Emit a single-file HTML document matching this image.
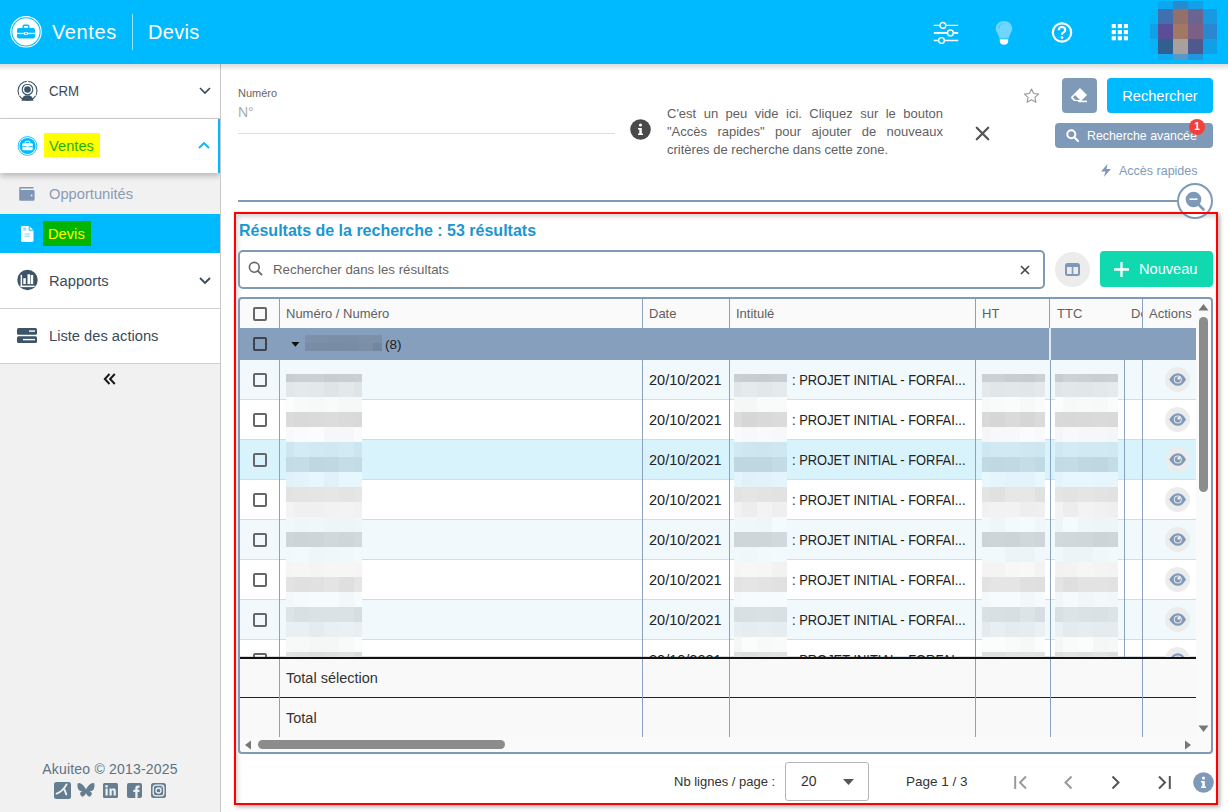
<!DOCTYPE html>
<html><head><meta charset="utf-8">
<style>
*{box-sizing:border-box;margin:0;padding:0}
html,body{width:1228px;height:812px;overflow:hidden;background:#fff;font-family:"Liberation Sans",sans-serif;color:#333}
.a{position:absolute}
#hdr{left:0;top:0;width:1228px;height:64px;background:#00baff}
#side{left:0;top:64px;width:221px;height:748px;background:#f1f1f1;border-right:1px solid #c8c8c8;overflow:hidden}
.mi{left:0;width:220px;background:#fff;border-bottom:1px solid #cfcfcf}
.mt{font-size:14.7px;color:#3a4a5c}
.ht{font-size:13px;color:#606060}
.cb{width:14px;height:14px;border:2px solid #666;border-radius:2px}
.dt{font-size:14.5px;color:#222}
.tt{font-size:14.5px;color:#333}
.eye{width:25px;height:25px;border-radius:50%;background:#ececec}
</style></head><body>
<!-- HEADER -->
<div id="hdr" class="a">
  <svg class="a" style="left:10px;top:16px" width="32" height="32" viewBox="0 0 32 32">
    <circle cx="16" cy="15.8" r="15.2" fill="none" stroke="#fff" stroke-width="1.1"/>
    <circle cx="16" cy="15.8" r="13.6" fill="#fff"/>
    <rect x="7" y="12" width="18" height="10.5" rx="1.8" fill="#00baff"/>
    <rect x="13.2" y="9.3" width="5.6" height="3.2" rx="1" fill="none" stroke="#00baff" stroke-width="1.4"/>
    <rect x="7" y="16.8" width="18" height="1.3" fill="#fff"/>
    <rect x="14.3" y="16" width="3.4" height="3" fill="#fff"/>
    <rect x="15.1" y="16.6" width="1.8" height="1.6" fill="#00baff"/>
  </svg>
  <div class="a" style="left:52px;top:21px;font-size:20px;color:#fff;letter-spacing:.6px">Ventes</div>
  <div class="a" style="left:132px;top:14px;width:1px;height:36px;background:rgba(255,255,255,.6)"></div>
  <div class="a" style="left:148px;top:21px;font-size:20px;color:#fff;letter-spacing:.3px">Devis</div>

  <svg class="a" style="left:933px;top:21px" width="27" height="23" viewBox="0 0 27 23">
    <path d="M0.8 4.4 H25.2 M0.8 19.5 H25.2" stroke="#fff" stroke-width="1.3"/>
    <path d="M0.8 11.9 H25.2" stroke="#fff" stroke-width="1.9"/>
    <g stroke="#fff" stroke-width="1.4" fill="#00baff">
      <circle cx="9.9" cy="4.4" r="2.9"/><circle cx="17.4" cy="11.9" r="2.9"/><circle cx="8.5" cy="19.5" r="2.9"/>
    </g>
  </svg>
  <svg class="a" style="left:995px;top:20px" width="18" height="25" viewBox="0 0 18 25">
    <path d="M9 0.9 C4.2 0.9 0.8 4.3 0.8 8.6 C0.8 12.3 3.4 14.2 4.4 18.5 H13.6 C14.6 14.2 17.2 12.3 17.2 8.6 C17.2 4.3 13.8 0.9 9 0.9Z" fill="#6fd6ff"/>
    <path d="M3.8 9 Q3.8 4.6 7.6 3.5" fill="none" stroke="#00baff" stroke-width=".8" opacity=".6"/>
    <path d="M4.8 19.3 H13.2 V21 Q13.2 24.7 9 24.7 Q4.8 24.7 4.8 21Z" fill="#fff"/>
  </svg>
  <svg class="a" style="left:1051px;top:21.5px" width="22" height="21" viewBox="0 0 22 21">
    <circle cx="11" cy="10.5" r="9.2" fill="none" stroke="#fff" stroke-width="2.2"/>
    <path d="M7.8 8.2 Q7.8 5 11 5 Q14.2 5 14.2 7.9 Q14.2 9.7 12.2 10.6 Q11 11.2 11 12.8" fill="none" stroke="#fff" stroke-width="2.1"/>
    <circle cx="11" cy="15.6" r="1.3" fill="#fff"/>
  </svg>
  <svg class="a" style="left:1111px;top:23px" width="18" height="18" viewBox="0 0 18 18" fill="#fff"><rect x="0.7" y="1" width="4.1" height="4.1"/><rect x="6.8" y="1" width="4.1" height="4.1"/><rect x="12.9" y="1" width="4.1" height="4.1"/><rect x="0.7" y="7.1" width="4.1" height="4.1"/><rect x="6.8" y="7.1" width="4.1" height="4.1"/><rect x="12.9" y="7.1" width="4.1" height="4.1"/><rect x="0.7" y="13.2" width="4.1" height="4.1"/><rect x="6.8" y="13.2" width="4.1" height="4.1"/><rect x="12.9" y="13.2" width="4.1" height="4.1"/></svg>
<div class="a" style="left:1158px;top:1px;width:15px;height:8px;background:#0aa8f0"></div>
<div class="a" style="left:1173px;top:1px;width:15px;height:8px;background:#2a8ad0"></div>
<div class="a" style="left:1188px;top:1px;width:15px;height:8px;background:#14a0e8"></div>
<div class="a" style="left:1150px;top:9px;width:8px;height:15px;background:#05b4f8"></div>
<div class="a" style="left:1158px;top:9px;width:15px;height:15px;background:#4070b0"></div>
<div class="a" style="left:1173px;top:9px;width:15px;height:15px;background:#94706a"></div>
<div class="a" style="left:1188px;top:9px;width:15px;height:15px;background:#6a6490"></div>
<div class="a" style="left:1203px;top:9px;width:14px;height:15px;background:#1a98e0"></div>
<div class="a" style="left:1150px;top:24px;width:8px;height:15px;background:#10a0e8"></div>
<div class="a" style="left:1158px;top:24px;width:15px;height:15px;background:#5a4e98"></div>
<div class="a" style="left:1173px;top:24px;width:15px;height:15px;background:#a07864"></div>
<div class="a" style="left:1188px;top:24px;width:15px;height:15px;background:#7a6088"></div>
<div class="a" style="left:1203px;top:24px;width:14px;height:15px;background:#2a88d0"></div>
<div class="a" style="left:1150px;top:39px;width:8px;height:15px;background:#08b2f6"></div>
<div class="a" style="left:1158px;top:39px;width:15px;height:15px;background:#306090"></div>
<div class="a" style="left:1173px;top:39px;width:15px;height:15px;background:#a8a09c"></div>
<div class="a" style="left:1188px;top:39px;width:15px;height:15px;background:#505890"></div>
<div class="a" style="left:1203px;top:39px;width:14px;height:15px;background:#10a0e8"></div>
<div class="a" style="left:1158px;top:54px;width:15px;height:6px;background:#10a8f0"></div>
<div class="a" style="left:1173px;top:54px;width:15px;height:6px;background:#5898c8"></div>
<div class="a" style="left:1188px;top:54px;width:15px;height:6px;background:#2098e0"></div>
</div>
<!-- SIDEBAR -->
<div id="side" class="a">
  <!-- CRM -->
  <div class="a mi" style="top:0;height:55px">
    <svg class="a" style="left:17px;top:16px" width="22" height="22" viewBox="0 0 22 22">
      <circle cx="10.5" cy="10.8" r="9.5" fill="none" stroke="#3d5468" stroke-width="1.1"/>
      <circle cx="10.5" cy="9.5" r="5.3" fill="none" stroke="#3d5468" stroke-width="1.1"/>
      <circle cx="10.5" cy="9.5" r="3.3" fill="#3d5468"/>
      <path d="M4.5 20.8 Q4.8 15.2 10.5 15.2 Q16.2 15.2 16.5 20.8 Z" fill="#3d5468"/>
      <path d="M10.5 0.5 L10.5 4 M1.5 15.5 L5.2 13.6 M19.5 15.5 L15.8 13.6" stroke="#fff" stroke-width="1.4"/>
    </svg>
    <div class="a mt" style="left:49px;top:19px;transform:scaleX(.9);transform-origin:0 0">CRM</div>
    <svg class="a" style="left:199px;top:23px" width="12" height="8" viewBox="0 0 12 8"><path d="M1 1 L6 6 L11 1" fill="none" stroke="#3a4a5c" stroke-width="1.6"/></svg>
  </div>
  <!-- Ventes -->
  <div class="a mi" style="top:55px;height:54px;border-bottom:none;box-shadow:0 3px 6px rgba(0,0,0,.24);z-index:2">
    <svg class="a" style="left:17px;top:16px" width="22" height="22" viewBox="0 0 22 22">
      <circle cx="10.5" cy="11" r="9.4" fill="none" stroke="#00baff" stroke-width="0.9"/>
      <circle cx="10.5" cy="11" r="8.1" fill="#00baff"/>
      <rect x="5.3" y="8.3" width="10.4" height="7" rx="1" fill="#fff"/>
      <rect x="8.2" y="6.3" width="4.6" height="2.4" rx=".7" fill="none" stroke="#fff" stroke-width="1"/>
      <rect x="5.3" y="11.2" width="10.4" height=".9" fill="#00baff"/>
      <rect x="9.6" y="10.7" width="1.8" height="1.9" fill="#fff"/>
    </svg>
    <div class="a" style="left:44px;top:14px;width:56px;height:24px;background:#ffff00"></div>
    <div class="a mt" style="left:49px;top:19px;color:#22b100">Ventes</div>
    <svg class="a" style="left:198px;top:22px" width="12" height="8" viewBox="0 0 12 8"><path d="M1 7 L6 2 L11 7" fill="none" stroke="#00baff" stroke-width="1.8"/></svg>
    <div class="a" style="left:218px;top:0;width:2px;height:54px;background:#00baff"></div>
  </div>
  <!-- Opportunites -->
  <svg class="a" style="left:19px;top:123px" width="16" height="14" viewBox="0 0 16 14"><path d="M1.5 0 H14.5 V1.6 H1.6 V2.9 H14.2 Q15.6 2.9 15.6 4.3 V12.4 Q15.6 13.8 14.2 13.8 H1.5 Q0.2 13.8 0.2 12.4 V1.4 Q0.2 0 1.5 0Z" fill="#7f95b5"/><circle cx="12.6" cy="8.4" r=".9" fill="#f1f1f1"/></svg>
  <div class="a mt" style="left:49px;top:122px;color:#8a9cb4">Opportunités</div>
  <!-- Devis -->
  <div class="a" style="left:0;top:150px;width:220px;height:39px;background:#00baff">
    <svg class="a" style="left:21px;top:12px" width="13" height="16" viewBox="0 0 13 16"><path d="M1.3 0 H8.2 L12.5 4.2 V14.6 Q12.5 15.9 11.2 15.9 H1.3 Q0 15.9 0 14.6 V1.3 Q0 0 1.3 0Z" fill="#fff"/><path d="M8.2 0 V4.2 H12.5" fill="none" stroke="#00baff" stroke-width=".9"/><rect x="2.2" y="1.7" width="3" height="1" fill="#5ec8f5"/><rect x="2.2" y="3.5" width="3" height="1" fill="#5ec8f5"/><rect x="3.5" y="7.4" width="5.6" height="1.3" fill="#a8dcf5"/><rect x="3.5" y="9.6" width="5.6" height="1.3" fill="#a8dcf5"/></svg>
    <div class="a" style="left:43px;top:7px;width:48px;height:25px;background:#00b400"></div>
    <div class="a mt" style="left:48px;top:12px;color:#ffff00">Devis</div>
  </div>
  <!-- Rapports -->
  <div class="a mi" style="top:189px;height:56px">
    <svg class="a" style="left:17px;top:16px" width="22" height="22" viewBox="0 0 22 22">
      <circle cx="10.5" cy="11" r="10.2" fill="#3d5468"/>
      <rect x="3.6" y="5.8" width="1.5" height="12.3" fill="#fff"/>
      <rect x="3.6" y="16.6" width="14" height="1.5" fill="#fff"/>
      <rect x="6.3" y="9.2" width="2.5" height="5.9" fill="#fff"/>
      <rect x="10.5" y="5.3" width="2.6" height="9.8" fill="#fff"/>
      <rect x="13.7" y="6" width="2.5" height="9.1" fill="#fff"/>
    </svg>
    <div class="a mt" style="left:49px;top:20px">Rapports</div>
    <svg class="a" style="left:199px;top:24px" width="12" height="8" viewBox="0 0 12 8"><path d="M1 1 L6 6 L11 1" fill="none" stroke="#3a4a5c" stroke-width="1.8"/></svg>
  </div>
  <!-- Liste des actions -->
  <div class="a mi" style="top:245px;height:55px">
    <svg class="a" style="left:17px;top:19px" width="20" height="16" viewBox="0 0 20 16"><rect x="0" y="0" width="20" height="6.8" rx="1.5" fill="#3d5468"/><rect x="0" y="8.3" width="20" height="6.8" rx="1.5" fill="#3d5468"/><rect x="12" y="2.4" width="6" height="1.4" fill="#fff"/><rect x="6" y="10.9" width="12" height="1.4" fill="#fff"/></svg>
    <div class="a mt" style="left:49px;top:19px">Liste des actions</div>
  </div>
  <svg class="a" style="left:103px;top:309px" width="13" height="12" viewBox="0 0 13 12"><path d="M6.5 1 L1.8 6 L6.5 11 M11.8 1 L7.1 6 L11.8 11" fill="none" stroke="#1a1a1a" stroke-width="2"/></svg>
  <div class="a" style="left:0;top:697px;width:220px;text-align:center;font-size:14px;color:#5d7286;letter-spacing:.2px">Akuiteo © 2013-2025</div>
  <svg class="a" style="left:54px;top:718px" width="17" height="17" viewBox="0 0 17 17"><rect width="17" height="17" rx="2.5" fill="#647d91"/><path d="M2.6 11.6 Q8.5 9.8 12.6 2.4" fill="none" stroke="#f1f1f1" stroke-width="1.9" stroke-linecap="round"/><path d="M10.2 7 L12.3 12.4" fill="none" stroke="#f1f1f1" stroke-width="1.9" stroke-linecap="round"/></svg>
  <svg class="a" style="left:77px;top:718px" width="18" height="17" viewBox="0 0 18 17"><path d="M9 7.5 C7.5 4 4 0.5 1.5 1 C0 1.4 0.4 5 1.2 7 C2 9 4 9.3 5.5 9.2 C3 9.8 2.5 11.5 3.8 13.5 C5.5 16 7.8 14 9 11 C10.2 14 12.5 16 14.2 13.5 C15.5 11.5 15 9.8 12.5 9.2 C14 9.3 16 9 16.8 7 C17.6 5 18 1.4 16.5 1 C14 0.5 10.5 4 9 7.5Z" fill="#647d91"/></svg>
  <svg class="a" style="left:103px;top:719px" width="15" height="15" viewBox="0 0 15 15"><rect width="15" height="15" rx="1.5" fill="#647d91"/><rect x="2.5" y="5.5" width="2.2" height="7" fill="#f1f1f1"/><circle cx="3.6" cy="3.3" r="1.3" fill="#f1f1f1"/><path d="M6.5 5.5 H8.6 V6.6 Q9.4 5.3 11 5.3 Q12.8 5.3 12.8 8 V12.5 H10.6 V8.5 Q10.6 7.2 9.7 7.2 Q8.7 7.2 8.7 8.6 V12.5 H6.5Z" fill="#f1f1f1"/></svg>
  <svg class="a" style="left:127px;top:719px" width="15" height="15" viewBox="0 0 15 15"><rect width="15" height="15" rx="2" fill="#647d91"/><path d="M8.3 15 V9 H6.3 V6.8 H8.3 V5.2 Q8.3 2.6 10.9 2.6 H12.6 V4.8 H11.3 Q10.6 4.8 10.6 5.6 V6.8 H12.6 L12.3 9 H10.6 V15Z" fill="#f1f1f1"/></svg>
  <svg class="a" style="left:151px;top:719px" width="15" height="15" viewBox="0 0 15 15"><rect width="15" height="15" rx="2.5" fill="#647d91"/><rect x="2.2" y="2.2" width="10.6" height="10.6" rx="2.5" fill="none" stroke="#f1f1f1" stroke-width="1.3"/><circle cx="7.5" cy="7.5" r="2.5" fill="none" stroke="#f1f1f1" stroke-width="1.3"/><circle cx="10.9" cy="4.1" r=".7" fill="#f1f1f1"/></svg>

</div>

<!-- MAIN TOP -->
<div class="a" style="left:0;top:64px;width:1228px;height:7px;background:linear-gradient(rgba(0,0,0,.14),rgba(0,0,0,0));z-index:4"></div>
<div class="a" style="left:238px;top:87px;font-size:11px;color:#666">Numéro</div>
<div class="a" style="left:238px;top:104px;font-size:14px;color:#aaa">N°</div>
<div class="a" style="left:238px;top:133px;width:377px;height:1px;background:#dcdcdc"></div>
<svg class="a" style="left:630px;top:119px" width="21" height="21" viewBox="0 0 21 21"><circle cx="10.5" cy="10.5" r="10.3" fill="#4a4a4a"/><circle cx="10.5" cy="6" r="1.6" fill="#fff"/><path d="M8 9 H11.8 V14.5 H13 V16 H8 V14.5 H9.3 V10.5 H8 Z" fill="#fff"/></svg>
<div class="a" style="left:667px;top:105px;width:276px;font-size:13px;line-height:18px;color:#5f5f5f;text-align:justify;text-align-last:left">C'est un peu vide ici. Cliquez sur le bouton "Accès rapides" pour ajouter de nouveaux critères de recherche dans cette zone.</div>
<svg class="a" style="left:975px;top:126px" width="15" height="15" viewBox="0 0 15 15"><path d="M1.8 1.8 L13.2 13.2 M13.2 1.8 L1.8 13.2" stroke="#555" stroke-width="2.3" stroke-linecap="round"/></svg>
<svg class="a" style="left:1023px;top:88px" width="17" height="16" viewBox="0 0 24 23"><path d="M12 1.5 L15.1 8 L22.2 8.8 L16.9 13.6 L18.4 20.6 L12 17 L5.6 20.6 L7.1 13.6 L1.8 8.8 L8.9 8 Z" fill="none" stroke="#9a9a9a" stroke-width="1.6" stroke-linejoin="round"/></svg>
<div class="a" style="left:1062px;top:78px;width:35px;height:35px;background:#7f99b9;border-radius:4px">
  <svg class="a" style="left:8px;top:9px" width="19" height="17" viewBox="0 0 19 17"><path d="M10 1 L17 8 L11 14 H4 L1.5 11.5 Q0.5 10.5 1.5 9.5 Z" fill="#fff"/><path d="M5 8 L10 13 L5.5 13 L3 10.5 Z" fill="#7f99b9"/><rect x="8" y="13.6" width="9" height="1.6" fill="#fff"/></svg>
</div>
<div class="a" style="left:1107px;top:78px;width:106px;height:35px;background:#00baff;border-radius:4px;color:#fff;font-size:14.6px;text-align:center;line-height:37px">Rechercher</div>
<div class="a" style="left:1055px;top:123px;width:158px;height:25px;background:#7f99b9;border-radius:4px;color:#fff;font-size:13px;line-height:25px">
  <svg class="a" style="left:11px;top:6px" width="13" height="13" viewBox="0 0 13 13"><circle cx="5.3" cy="5.3" r="4" fill="none" stroke="#fff" stroke-width="2"/><path d="M8.3 8.3 L12 12" stroke="#fff" stroke-width="2.2" stroke-linecap="round"/></svg>
  <span class="a" style="left:32px;top:0;white-space:nowrap;transform:scaleX(.95);transform-origin:0 0">Recherche avancée</span>
</div>
<div class="a" style="left:1189px;top:119px;width:16px;height:16px;border-radius:50%;background:#f2403a;color:#fff;font-size:10px;font-weight:bold;text-align:center;line-height:16px">1</div>
<svg class="a" style="left:1100px;top:164px" width="12" height="13" viewBox="0 0 12 13"><path d="M7.5 0 L1 7.5 H5.5 L3.8 13 L11 5 H6.5 Z" fill="#7f99b9"/></svg>
<div class="a" style="left:1119px;top:164px;font-size:12.5px;color:#7f99b9">Accès rapides</div>
<div class="a" style="left:238px;top:200px;width:942px;height:2px;background:#7f99b9"></div>
<div class="a" style="left:1177px;top:183px;width:36px;height:36px;border-radius:50%;border:2px solid #7f99b9;background:#fff;z-index:3">
  <svg class="a" style="left:0;top:0" width="32" height="32" viewBox="0 0 32 32"><path d="M19 19 L24.5 24.5" stroke="#7f99b9" stroke-width="2.6" stroke-linecap="round"/><circle cx="14.5" cy="14.5" r="7.8" fill="#7f99b9"/><rect x="10.5" y="13.4" width="8" height="1.6" fill="#fff"/></svg>
</div>
<!-- RESULTS BOX -->
<div class="a" style="left:234px;top:212px;width:984px;height:593px;box-shadow:2px 2px 4px rgba(0,0,0,.3)"></div><div class="a" style="left:236px;top:214px;width:980px;height:589px;background:#fff;box-shadow:inset 2px 3px 4px rgba(0,0,0,.16)"></div>
<div class="a" style="left:239px;top:222px;font-size:16px;font-weight:bold;color:#1c96d2">Résultats de la recherche : 53 résultats</div>
<div class="a" style="left:238px;top:250px;width:807px;height:39px;border:2px solid #7f99b9;border-radius:5px;background:#fff">
  <svg class="a" style="left:8px;top:9px" width="16" height="16" viewBox="0 0 16 16"><circle cx="6.3" cy="6.3" r="4.9" fill="none" stroke="#666" stroke-width="1.6"/><path d="M9.8 9.8 L13.6 13.6" stroke="#666" stroke-width="1.8" stroke-linecap="round"/></svg>
  <div class="a" style="left:33px;top:10px;font-size:13.3px;color:#666">Rechercher dans les résultats</div>
  <svg class="a" style="left:780px;top:13px" width="10" height="10" viewBox="0 0 10 10"><path d="M1 1 L9 9 M9 1 L1 9" stroke="#444" stroke-width="1.6"/></svg>
</div>
<div class="a" style="left:1055px;top:252px;width:35px;height:35px;border-radius:50%;background:#ececec">
  <svg class="a" style="left:10px;top:11px" width="15" height="13" viewBox="0 0 15 13"><rect x="1" y="1" width="13" height="11" rx="1.5" fill="none" stroke="#7f99b9" stroke-width="2"/><rect x="1" y="1" width="13" height="3" fill="#7f99b9"/><rect x="6.7" y="2" width="1.6" height="10" fill="#7f99b9"/></svg>
</div>
<div class="a" style="left:1100px;top:251px;width:113px;height:36px;border-radius:4px;background:#10d9b0;color:#fff;font-size:14.6px;line-height:36px">
  <svg class="a" style="left:13px;top:10px" width="17" height="17" viewBox="0 0 17 17"><path d="M8.5 1 V16 M1 8.5 H16" stroke="#fff" stroke-width="2.3"/></svg>
  <span class="a" style="left:39px;top:0">Nouveau</span>
</div>
<!-- TABLE -->
<div class="a" style="left:238px;top:297px;width:975px;height:457px;border-radius:4px;background:#fafafa"></div>
<div class="a ht" style="left:286px;top:306px">Numéro / Numéro</div>
<div class="a ht" style="left:649px;top:306px">Date</div>
<div class="a ht" style="left:736px;top:306px">Intitulé</div>
<div class="a ht" style="left:982px;top:306px">HT</div>
<div class="a ht" style="left:1057px;top:306px">TTC</div>
<div class="a ht" style="left:1131px;top:306px">De</div>
<div class="a" style="left:1142px;top:299px;width:54px;height:29px;background:#fafafa"></div>
<div class="a ht" style="left:1149px;top:306px">Actions</div>
<div class="a cb" style="left:253px;top:307px"></div>
<div class="a" style="left:239px;top:328px;width:957px;height:32px;background:#869fbd"></div>
<div class="a" style="left:1049px;top:328px;width:2px;height:32px;background:#e3e9f0"></div>
<div class="a cb" style="left:253px;top:337px;border-color:#3d4450"></div>
<svg class="a" style="left:291px;top:342px" width="10" height="6" viewBox="0 0 11 7"><path d="M0 0 H9.5 L4.75 5.5 Z" fill="#111"/></svg>
<div class="a" style="left:305px;top:335px;width:8px;height:8px;background:#7d92aa"></div>
<div class="a" style="left:313px;top:335px;width:15px;height:8px;background:#7b90a9"></div>
<div class="a" style="left:328px;top:335px;width:15px;height:8px;background:#798ea7"></div>
<div class="a" style="left:343px;top:335px;width:15px;height:8px;background:#7a8ea7"></div>
<div class="a" style="left:358px;top:335px;width:15px;height:8px;background:#7c90a8"></div>
<div class="a" style="left:373px;top:335px;width:9px;height:8px;background:#7b8fa7"></div>
<div class="a" style="left:305px;top:343px;width:8px;height:8px;background:#798ea6"></div>
<div class="a" style="left:313px;top:343px;width:15px;height:8px;background:#788ca5"></div>
<div class="a" style="left:328px;top:343px;width:15px;height:8px;background:#778ba4"></div>
<div class="a" style="left:343px;top:343px;width:15px;height:8px;background:#788ca5"></div>
<div class="a" style="left:358px;top:343px;width:15px;height:8px;background:#7a8ea6"></div>
<div class="a" style="left:373px;top:343px;width:9px;height:8px;background:#72869d"></div>
<div class="a" style="left:385px;top:337px;font-size:13.5px;color:#222">(8)</div>
<div class="a" style="left:239px;top:360px;width:957px;height:40px;background:#f1f9fd;border-bottom:1px solid #d8dcdf"></div>
<div class="a cb" style="left:253px;top:373px"></div>
<div class="a dt" style="left:649px;top:372px">20/10/2021</div>
<div class="a dt" style="left:792px;top:372px"><span style="display:inline-block;transform:scaleX(.89);transform-origin:0 0;white-space:nowrap">: PROJET INITIAL - FORFAI...</span></div>
<div class="a eye" style="left:1165px;top:367px"><svg width="25" height="25" viewBox="0 0 25 25"><path d="M4.3 12.5 Q8 6.2 12.8 6.2 Q17.6 6.2 21 12.5 Q17.6 18.8 12.8 18.8 Q8 18.8 4.3 12.5Z" fill="#7f99b9"/><circle cx="12.8" cy="12.5" r="4" fill="#ececec"/><circle cx="12.8" cy="12.5" r="3" fill="#7f99b9"/><circle cx="13.9" cy="11.3" r="1.5" fill="#ececec"/></svg></div>
<div class="a" style="left:239px;top:400px;width:957px;height:40px;background:#ffffff;border-bottom:1px solid #d8dcdf"></div>
<div class="a cb" style="left:253px;top:413px"></div>
<div class="a dt" style="left:649px;top:412px">20/10/2021</div>
<div class="a dt" style="left:792px;top:412px"><span style="display:inline-block;transform:scaleX(.89);transform-origin:0 0;white-space:nowrap">: PROJET INITIAL - FORFAI...</span></div>
<div class="a eye" style="left:1165px;top:407px"><svg width="25" height="25" viewBox="0 0 25 25"><path d="M4.3 12.5 Q8 6.2 12.8 6.2 Q17.6 6.2 21 12.5 Q17.6 18.8 12.8 18.8 Q8 18.8 4.3 12.5Z" fill="#7f99b9"/><circle cx="12.8" cy="12.5" r="4" fill="#ececec"/><circle cx="12.8" cy="12.5" r="3" fill="#7f99b9"/><circle cx="13.9" cy="11.3" r="1.5" fill="#ececec"/></svg></div>
<div class="a" style="left:239px;top:440px;width:957px;height:40px;background:#d9f3fd;border-bottom:1px solid #d8dcdf"></div>
<div class="a cb" style="left:253px;top:453px"></div>
<div class="a dt" style="left:649px;top:452px">20/10/2021</div>
<div class="a dt" style="left:792px;top:452px"><span style="display:inline-block;transform:scaleX(.89);transform-origin:0 0;white-space:nowrap">: PROJET INITIAL - FORFAI...</span></div>
<div class="a eye" style="left:1165px;top:447px"><svg width="25" height="25" viewBox="0 0 25 25"><path d="M4.3 12.5 Q8 6.2 12.8 6.2 Q17.6 6.2 21 12.5 Q17.6 18.8 12.8 18.8 Q8 18.8 4.3 12.5Z" fill="#7f99b9"/><circle cx="12.8" cy="12.5" r="4" fill="#ececec"/><circle cx="12.8" cy="12.5" r="3" fill="#7f99b9"/><circle cx="13.9" cy="11.3" r="1.5" fill="#ececec"/></svg></div>
<div class="a" style="left:239px;top:480px;width:957px;height:40px;background:#ffffff;border-bottom:1px solid #d8dcdf"></div>
<div class="a cb" style="left:253px;top:493px"></div>
<div class="a dt" style="left:649px;top:492px">20/10/2021</div>
<div class="a dt" style="left:792px;top:492px"><span style="display:inline-block;transform:scaleX(.89);transform-origin:0 0;white-space:nowrap">: PROJET INITIAL - FORFAI...</span></div>
<div class="a eye" style="left:1165px;top:487px"><svg width="25" height="25" viewBox="0 0 25 25"><path d="M4.3 12.5 Q8 6.2 12.8 6.2 Q17.6 6.2 21 12.5 Q17.6 18.8 12.8 18.8 Q8 18.8 4.3 12.5Z" fill="#7f99b9"/><circle cx="12.8" cy="12.5" r="4" fill="#ececec"/><circle cx="12.8" cy="12.5" r="3" fill="#7f99b9"/><circle cx="13.9" cy="11.3" r="1.5" fill="#ececec"/></svg></div>
<div class="a" style="left:239px;top:520px;width:957px;height:40px;background:#f1f9fd;border-bottom:1px solid #d8dcdf"></div>
<div class="a cb" style="left:253px;top:533px"></div>
<div class="a dt" style="left:649px;top:532px">20/10/2021</div>
<div class="a dt" style="left:792px;top:532px"><span style="display:inline-block;transform:scaleX(.89);transform-origin:0 0;white-space:nowrap">: PROJET INITIAL - FORFAI...</span></div>
<div class="a eye" style="left:1165px;top:527px"><svg width="25" height="25" viewBox="0 0 25 25"><path d="M4.3 12.5 Q8 6.2 12.8 6.2 Q17.6 6.2 21 12.5 Q17.6 18.8 12.8 18.8 Q8 18.8 4.3 12.5Z" fill="#7f99b9"/><circle cx="12.8" cy="12.5" r="4" fill="#ececec"/><circle cx="12.8" cy="12.5" r="3" fill="#7f99b9"/><circle cx="13.9" cy="11.3" r="1.5" fill="#ececec"/></svg></div>
<div class="a" style="left:239px;top:560px;width:957px;height:40px;background:#ffffff;border-bottom:1px solid #d8dcdf"></div>
<div class="a cb" style="left:253px;top:573px"></div>
<div class="a dt" style="left:649px;top:572px">20/10/2021</div>
<div class="a dt" style="left:792px;top:572px"><span style="display:inline-block;transform:scaleX(.89);transform-origin:0 0;white-space:nowrap">: PROJET INITIAL - FORFAI...</span></div>
<div class="a eye" style="left:1165px;top:567px"><svg width="25" height="25" viewBox="0 0 25 25"><path d="M4.3 12.5 Q8 6.2 12.8 6.2 Q17.6 6.2 21 12.5 Q17.6 18.8 12.8 18.8 Q8 18.8 4.3 12.5Z" fill="#7f99b9"/><circle cx="12.8" cy="12.5" r="4" fill="#ececec"/><circle cx="12.8" cy="12.5" r="3" fill="#7f99b9"/><circle cx="13.9" cy="11.3" r="1.5" fill="#ececec"/></svg></div>
<div class="a" style="left:239px;top:600px;width:957px;height:40px;background:#f1f9fd;border-bottom:1px solid #d8dcdf"></div>
<div class="a cb" style="left:253px;top:613px"></div>
<div class="a dt" style="left:649px;top:612px">20/10/2021</div>
<div class="a dt" style="left:792px;top:612px"><span style="display:inline-block;transform:scaleX(.89);transform-origin:0 0;white-space:nowrap">: PROJET INITIAL - FORFAI...</span></div>
<div class="a eye" style="left:1165px;top:607px"><svg width="25" height="25" viewBox="0 0 25 25"><path d="M4.3 12.5 Q8 6.2 12.8 6.2 Q17.6 6.2 21 12.5 Q17.6 18.8 12.8 18.8 Q8 18.8 4.3 12.5Z" fill="#7f99b9"/><circle cx="12.8" cy="12.5" r="4" fill="#ececec"/><circle cx="12.8" cy="12.5" r="3" fill="#7f99b9"/><circle cx="13.9" cy="11.3" r="1.5" fill="#ececec"/></svg></div>
<div class="a" style="left:239px;top:640px;width:957px;height:17px;background:#ffffff;border-bottom:1px solid #d8dcdf"></div>
<div class="a cb" style="left:253px;top:653px"></div>
<div class="a dt" style="left:649px;top:652px">20/10/2021</div>
<div class="a dt" style="left:792px;top:652px"><span style="display:inline-block;transform:scaleX(.89);transform-origin:0 0;white-space:nowrap">: PROJET INITIAL - FORFAI...</span></div>
<div class="a eye" style="left:1165px;top:647px"><svg width="25" height="25" viewBox="0 0 25 25"><path d="M4.3 12.5 Q8 6.2 12.8 6.2 Q17.6 6.2 21 12.5 Q17.6 18.8 12.8 18.8 Q8 18.8 4.3 12.5Z" fill="#7f99b9"/><circle cx="12.8" cy="12.5" r="4" fill="#ececec"/><circle cx="12.8" cy="12.5" r="3" fill="#7f99b9"/><circle cx="13.9" cy="11.3" r="1.5" fill="#ececec"/></svg></div>
<div class="a" style="left:286px;top:374px;width:8px;height:8px;background:#c7ced0"></div>
<div class="a" style="left:294px;top:374px;width:15px;height:8px;background:#cad1d3"></div>
<div class="a" style="left:309px;top:374px;width:15px;height:8px;background:#cad1d3"></div>
<div class="a" style="left:324px;top:374px;width:15px;height:8px;background:#c7ced0"></div>
<div class="a" style="left:339px;top:374px;width:15px;height:8px;background:#c8cfd1"></div>
<div class="a" style="left:354px;top:374px;width:8px;height:8px;background:#cad1d3"></div>
<div class="a" style="left:286px;top:382px;width:8px;height:15px;background:#e2e8ea"></div>
<div class="a" style="left:294px;top:382px;width:15px;height:15px;background:#e4eaec"></div>
<div class="a" style="left:309px;top:382px;width:15px;height:15px;background:#e3e9eb"></div>
<div class="a" style="left:324px;top:382px;width:15px;height:15px;background:#dfe5e7"></div>
<div class="a" style="left:339px;top:382px;width:15px;height:15px;background:#e3e9eb"></div>
<div class="a" style="left:354px;top:382px;width:8px;height:15px;background:#dfe5e7"></div>
<div class="a" style="left:286px;top:397px;width:8px;height:15px;background:#fbfdfd"></div>
<div class="a" style="left:294px;top:397px;width:15px;height:15px;background:#f8fafa"></div>
<div class="a" style="left:309px;top:397px;width:15px;height:15px;background:#f7f9f9"></div>
<div class="a" style="left:324px;top:397px;width:15px;height:15px;background:#f9fbfb"></div>
<div class="a" style="left:339px;top:397px;width:15px;height:15px;background:#f6f8f8"></div>
<div class="a" style="left:354px;top:397px;width:8px;height:15px;background:#f6f8f8"></div>
<div class="a" style="left:286px;top:412px;width:8px;height:15px;background:#dbdbdb"></div>
<div class="a" style="left:294px;top:412px;width:15px;height:15px;background:#d9d9d9"></div>
<div class="a" style="left:309px;top:412px;width:15px;height:15px;background:#dadada"></div>
<div class="a" style="left:324px;top:412px;width:15px;height:15px;background:#dcdcdc"></div>
<div class="a" style="left:339px;top:412px;width:15px;height:15px;background:#dadada"></div>
<div class="a" style="left:354px;top:412px;width:8px;height:15px;background:#d9d9d9"></div>
<div class="a" style="left:286px;top:427px;width:8px;height:15px;background:#f8f9fa"></div>
<div class="a" style="left:294px;top:427px;width:15px;height:15px;background:#fafbfc"></div>
<div class="a" style="left:309px;top:427px;width:15px;height:15px;background:#fbfcfd"></div>
<div class="a" style="left:324px;top:427px;width:15px;height:15px;background:#f6f7f8"></div>
<div class="a" style="left:339px;top:427px;width:15px;height:15px;background:#f6f7f8"></div>
<div class="a" style="left:354px;top:427px;width:8px;height:15px;background:#fafbfc"></div>
<div class="a" style="left:286px;top:442px;width:8px;height:15px;background:#cee6ef"></div>
<div class="a" style="left:294px;top:442px;width:15px;height:15px;background:#d3ebf4"></div>
<div class="a" style="left:309px;top:442px;width:15px;height:15px;background:#d1e9f2"></div>
<div class="a" style="left:324px;top:442px;width:15px;height:15px;background:#d0e8f1"></div>
<div class="a" style="left:339px;top:442px;width:15px;height:15px;background:#d2eaf3"></div>
<div class="a" style="left:354px;top:442px;width:8px;height:15px;background:#cde5ee"></div>
<div class="a" style="left:286px;top:457px;width:8px;height:15px;background:#c4dce5"></div>
<div class="a" style="left:294px;top:457px;width:15px;height:15px;background:#c5dde6"></div>
<div class="a" style="left:309px;top:457px;width:15px;height:15px;background:#bfd7e0"></div>
<div class="a" style="left:324px;top:457px;width:15px;height:15px;background:#c0d8e1"></div>
<div class="a" style="left:339px;top:457px;width:15px;height:15px;background:#c5dde6"></div>
<div class="a" style="left:354px;top:457px;width:8px;height:15px;background:#c3dbe4"></div>
<div class="a" style="left:286px;top:472px;width:8px;height:15px;background:#e1f1f7"></div>
<div class="a" style="left:294px;top:472px;width:15px;height:15px;background:#e3f3f9"></div>
<div class="a" style="left:309px;top:472px;width:15px;height:15px;background:#e7f7fd"></div>
<div class="a" style="left:324px;top:472px;width:15px;height:15px;background:#e1f1f7"></div>
<div class="a" style="left:339px;top:472px;width:15px;height:15px;background:#e7f7fd"></div>
<div class="a" style="left:354px;top:472px;width:8px;height:15px;background:#e7f7fd"></div>
<div class="a" style="left:286px;top:487px;width:8px;height:15px;background:#e3e3e3"></div>
<div class="a" style="left:294px;top:487px;width:15px;height:15px;background:#e4e4e4"></div>
<div class="a" style="left:309px;top:487px;width:15px;height:15px;background:#e5e5e5"></div>
<div class="a" style="left:324px;top:487px;width:15px;height:15px;background:#e6e6e6"></div>
<div class="a" style="left:339px;top:487px;width:15px;height:15px;background:#e4e4e4"></div>
<div class="a" style="left:354px;top:487px;width:8px;height:15px;background:#e6e6e6"></div>
<div class="a" style="left:286px;top:502px;width:8px;height:15px;background:#f3f3f3"></div>
<div class="a" style="left:294px;top:502px;width:15px;height:15px;background:#f0f0f0"></div>
<div class="a" style="left:309px;top:502px;width:15px;height:15px;background:#f0f0f0"></div>
<div class="a" style="left:324px;top:502px;width:15px;height:15px;background:#f2f2f2"></div>
<div class="a" style="left:339px;top:502px;width:15px;height:15px;background:#f3f3f3"></div>
<div class="a" style="left:354px;top:502px;width:8px;height:15px;background:#f1f1f1"></div>
<div class="a" style="left:286px;top:517px;width:8px;height:15px;background:#f0f8fb"></div>
<div class="a" style="left:294px;top:517px;width:15px;height:15px;background:#eef6f9"></div>
<div class="a" style="left:309px;top:517px;width:15px;height:15px;background:#eff7fa"></div>
<div class="a" style="left:324px;top:517px;width:15px;height:15px;background:#edf5f8"></div>
<div class="a" style="left:339px;top:517px;width:15px;height:15px;background:#edf5f8"></div>
<div class="a" style="left:354px;top:517px;width:8px;height:15px;background:#eef6f9"></div>
<div class="a" style="left:286px;top:532px;width:8px;height:15px;background:#cfd6d9"></div>
<div class="a" style="left:294px;top:532px;width:15px;height:15px;background:#cdd4d7"></div>
<div class="a" style="left:309px;top:532px;width:15px;height:15px;background:#ced5d8"></div>
<div class="a" style="left:324px;top:532px;width:15px;height:15px;background:#d1d8db"></div>
<div class="a" style="left:339px;top:532px;width:15px;height:15px;background:#cfd6d9"></div>
<div class="a" style="left:354px;top:532px;width:8px;height:15px;background:#d2d9dc"></div>
<div class="a" style="left:286px;top:547px;width:8px;height:15px;background:#f0f9fc"></div>
<div class="a" style="left:294px;top:547px;width:15px;height:15px;background:#f1fafd"></div>
<div class="a" style="left:309px;top:547px;width:15px;height:15px;background:#edf6f9"></div>
<div class="a" style="left:324px;top:547px;width:15px;height:15px;background:#eef7fa"></div>
<div class="a" style="left:339px;top:547px;width:15px;height:15px;background:#eff8fb"></div>
<div class="a" style="left:354px;top:547px;width:8px;height:15px;background:#f1fafd"></div>
<div class="a" style="left:286px;top:562px;width:8px;height:15px;background:#f5f5f5"></div>
<div class="a" style="left:294px;top:562px;width:15px;height:15px;background:#f6f6f6"></div>
<div class="a" style="left:309px;top:562px;width:15px;height:15px;background:#f4f4f4"></div>
<div class="a" style="left:324px;top:562px;width:15px;height:15px;background:#f6f6f6"></div>
<div class="a" style="left:339px;top:562px;width:15px;height:15px;background:#f6f6f6"></div>
<div class="a" style="left:354px;top:562px;width:8px;height:15px;background:#f5f5f5"></div>
<div class="a" style="left:286px;top:577px;width:8px;height:15px;background:#e3e3e3"></div>
<div class="a" style="left:294px;top:577px;width:15px;height:15px;background:#e0e0e0"></div>
<div class="a" style="left:309px;top:577px;width:15px;height:15px;background:#e1e1e1"></div>
<div class="a" style="left:324px;top:577px;width:15px;height:15px;background:#e4e4e4"></div>
<div class="a" style="left:339px;top:577px;width:15px;height:15px;background:#dfdfdf"></div>
<div class="a" style="left:354px;top:577px;width:8px;height:15px;background:#e5e5e5"></div>
<div class="a" style="left:286px;top:592px;width:8px;height:15px;background:#f3f8fa"></div>
<div class="a" style="left:294px;top:592px;width:15px;height:15px;background:#f5fafc"></div>
<div class="a" style="left:309px;top:592px;width:15px;height:15px;background:#f6fbfd"></div>
<div class="a" style="left:324px;top:592px;width:15px;height:15px;background:#f6fbfd"></div>
<div class="a" style="left:339px;top:592px;width:15px;height:15px;background:#f2f7f9"></div>
<div class="a" style="left:354px;top:592px;width:8px;height:15px;background:#f6fbfd"></div>
<div class="a" style="left:286px;top:607px;width:8px;height:15px;background:#dce4e7"></div>
<div class="a" style="left:294px;top:607px;width:15px;height:15px;background:#d8e0e3"></div>
<div class="a" style="left:309px;top:607px;width:15px;height:15px;background:#dae2e5"></div>
<div class="a" style="left:324px;top:607px;width:15px;height:15px;background:#dae2e5"></div>
<div class="a" style="left:339px;top:607px;width:15px;height:15px;background:#dae2e5"></div>
<div class="a" style="left:354px;top:607px;width:8px;height:15px;background:#d6dee1"></div>
<div class="a" style="left:286px;top:622px;width:8px;height:15px;background:#e8f0f3"></div>
<div class="a" style="left:294px;top:622px;width:15px;height:15px;background:#e8f0f3"></div>
<div class="a" style="left:309px;top:622px;width:15px;height:15px;background:#e4ecef"></div>
<div class="a" style="left:324px;top:622px;width:15px;height:15px;background:#e8f0f3"></div>
<div class="a" style="left:339px;top:622px;width:15px;height:15px;background:#e9f1f4"></div>
<div class="a" style="left:354px;top:622px;width:8px;height:15px;background:#e7eff2"></div>
<div class="a" style="left:286px;top:637px;width:8px;height:15px;background:#f7f9f9"></div>
<div class="a" style="left:294px;top:637px;width:15px;height:15px;background:#f7f9f9"></div>
<div class="a" style="left:309px;top:637px;width:15px;height:15px;background:#f5f7f7"></div>
<div class="a" style="left:324px;top:637px;width:15px;height:15px;background:#f5f7f7"></div>
<div class="a" style="left:339px;top:637px;width:15px;height:15px;background:#f8fafa"></div>
<div class="a" style="left:354px;top:637px;width:8px;height:15px;background:#fbfdfd"></div>
<div class="a" style="left:286px;top:652px;width:8px;height:5px;background:#e2e2e2"></div>
<div class="a" style="left:294px;top:652px;width:15px;height:5px;background:#e0e0e0"></div>
<div class="a" style="left:309px;top:652px;width:15px;height:5px;background:#dddddd"></div>
<div class="a" style="left:324px;top:652px;width:15px;height:5px;background:#dfdfdf"></div>
<div class="a" style="left:339px;top:652px;width:15px;height:5px;background:#e3e3e3"></div>
<div class="a" style="left:354px;top:652px;width:8px;height:5px;background:#dddddd"></div>
<div class="a" style="left:734px;top:374px;width:8px;height:8px;background:#c9d0d2"></div>
<div class="a" style="left:742px;top:374px;width:15px;height:8px;background:#c7ced0"></div>
<div class="a" style="left:757px;top:374px;width:15px;height:8px;background:#c6cdcf"></div>
<div class="a" style="left:772px;top:374px;width:15px;height:8px;background:#c8cfd1"></div>
<div class="a" style="left:734px;top:382px;width:8px;height:15px;background:#e2e8ea"></div>
<div class="a" style="left:742px;top:382px;width:15px;height:15px;background:#e5ebed"></div>
<div class="a" style="left:757px;top:382px;width:15px;height:15px;background:#e2e8ea"></div>
<div class="a" style="left:772px;top:382px;width:15px;height:15px;background:#e5ebed"></div>
<div class="a" style="left:734px;top:397px;width:8px;height:15px;background:#f5f7f7"></div>
<div class="a" style="left:742px;top:397px;width:15px;height:15px;background:#f5f7f7"></div>
<div class="a" style="left:757px;top:397px;width:15px;height:15px;background:#f9fbfb"></div>
<div class="a" style="left:772px;top:397px;width:15px;height:15px;background:#f9fbfb"></div>
<div class="a" style="left:734px;top:412px;width:8px;height:15px;background:#dcdcdc"></div>
<div class="a" style="left:742px;top:412px;width:15px;height:15px;background:#d6d6d6"></div>
<div class="a" style="left:757px;top:412px;width:15px;height:15px;background:#d9d9d9"></div>
<div class="a" style="left:772px;top:412px;width:15px;height:15px;background:#dbdbdb"></div>
<div class="a" style="left:734px;top:427px;width:8px;height:15px;background:#f9fafb"></div>
<div class="a" style="left:742px;top:427px;width:15px;height:15px;background:#f7f8f9"></div>
<div class="a" style="left:757px;top:427px;width:15px;height:15px;background:#f9fafb"></div>
<div class="a" style="left:772px;top:427px;width:15px;height:15px;background:#f7f8f9"></div>
<div class="a" style="left:734px;top:442px;width:8px;height:15px;background:#d1e9f2"></div>
<div class="a" style="left:742px;top:442px;width:15px;height:15px;background:#cee6ef"></div>
<div class="a" style="left:757px;top:442px;width:15px;height:15px;background:#cde5ee"></div>
<div class="a" style="left:772px;top:442px;width:15px;height:15px;background:#cfe7f0"></div>
<div class="a" style="left:734px;top:457px;width:8px;height:15px;background:#bfd7e0"></div>
<div class="a" style="left:742px;top:457px;width:15px;height:15px;background:#bfd7e0"></div>
<div class="a" style="left:757px;top:457px;width:15px;height:15px;background:#bfd7e0"></div>
<div class="a" style="left:772px;top:457px;width:15px;height:15px;background:#c3dbe4"></div>
<div class="a" style="left:734px;top:472px;width:8px;height:15px;background:#e5f5fb"></div>
<div class="a" style="left:742px;top:472px;width:15px;height:15px;background:#e1f1f7"></div>
<div class="a" style="left:757px;top:472px;width:15px;height:15px;background:#e2f2f8"></div>
<div class="a" style="left:772px;top:472px;width:15px;height:15px;background:#e4f4fa"></div>
<div class="a" style="left:734px;top:487px;width:8px;height:15px;background:#e3e3e3"></div>
<div class="a" style="left:742px;top:487px;width:15px;height:15px;background:#e5e5e5"></div>
<div class="a" style="left:757px;top:487px;width:15px;height:15px;background:#e3e3e3"></div>
<div class="a" style="left:772px;top:487px;width:15px;height:15px;background:#e2e2e2"></div>
<div class="a" style="left:734px;top:502px;width:8px;height:15px;background:#f2f2f2"></div>
<div class="a" style="left:742px;top:502px;width:15px;height:15px;background:#ededed"></div>
<div class="a" style="left:757px;top:502px;width:15px;height:15px;background:#f3f3f3"></div>
<div class="a" style="left:772px;top:502px;width:15px;height:15px;background:#efefef"></div>
<div class="a" style="left:734px;top:517px;width:8px;height:15px;background:#eff7fa"></div>
<div class="a" style="left:742px;top:517px;width:15px;height:15px;background:#eff7fa"></div>
<div class="a" style="left:757px;top:517px;width:15px;height:15px;background:#eef6f9"></div>
<div class="a" style="left:772px;top:517px;width:15px;height:15px;background:#f3fbfe"></div>
<div class="a" style="left:734px;top:532px;width:8px;height:15px;background:#cfd6d9"></div>
<div class="a" style="left:742px;top:532px;width:15px;height:15px;background:#cfd6d9"></div>
<div class="a" style="left:757px;top:532px;width:15px;height:15px;background:#cfd6d9"></div>
<div class="a" style="left:772px;top:532px;width:15px;height:15px;background:#d2d9dc"></div>
<div class="a" style="left:734px;top:547px;width:8px;height:15px;background:#eff8fb"></div>
<div class="a" style="left:742px;top:547px;width:15px;height:15px;background:#eef7fa"></div>
<div class="a" style="left:757px;top:547px;width:15px;height:15px;background:#f0f9fc"></div>
<div class="a" style="left:772px;top:547px;width:15px;height:15px;background:#f1fafd"></div>
<div class="a" style="left:734px;top:562px;width:8px;height:15px;background:#f6f6f6"></div>
<div class="a" style="left:742px;top:562px;width:15px;height:15px;background:#f7f7f7"></div>
<div class="a" style="left:757px;top:562px;width:15px;height:15px;background:#f6f6f6"></div>
<div class="a" style="left:772px;top:562px;width:15px;height:15px;background:#f2f2f2"></div>
<div class="a" style="left:734px;top:577px;width:8px;height:15px;background:#e3e3e3"></div>
<div class="a" style="left:742px;top:577px;width:15px;height:15px;background:#e5e5e5"></div>
<div class="a" style="left:757px;top:577px;width:15px;height:15px;background:#e3e3e3"></div>
<div class="a" style="left:772px;top:577px;width:15px;height:15px;background:#e1e1e1"></div>
<div class="a" style="left:734px;top:592px;width:8px;height:15px;background:#f4f9fb"></div>
<div class="a" style="left:742px;top:592px;width:15px;height:15px;background:#f6fbfd"></div>
<div class="a" style="left:757px;top:592px;width:15px;height:15px;background:#f6fbfd"></div>
<div class="a" style="left:772px;top:592px;width:15px;height:15px;background:#f6fbfd"></div>
<div class="a" style="left:734px;top:607px;width:8px;height:15px;background:#d7dfe2"></div>
<div class="a" style="left:742px;top:607px;width:15px;height:15px;background:#d8e0e3"></div>
<div class="a" style="left:757px;top:607px;width:15px;height:15px;background:#d9e1e4"></div>
<div class="a" style="left:772px;top:607px;width:15px;height:15px;background:#d8e0e3"></div>
<div class="a" style="left:734px;top:622px;width:8px;height:15px;background:#e7eff2"></div>
<div class="a" style="left:742px;top:622px;width:15px;height:15px;background:#e5edf0"></div>
<div class="a" style="left:757px;top:622px;width:15px;height:15px;background:#e7eff2"></div>
<div class="a" style="left:772px;top:622px;width:15px;height:15px;background:#e5edf0"></div>
<div class="a" style="left:734px;top:637px;width:8px;height:15px;background:#f5f7f7"></div>
<div class="a" style="left:742px;top:637px;width:15px;height:15px;background:#fbfdfd"></div>
<div class="a" style="left:757px;top:637px;width:15px;height:15px;background:#f8fafa"></div>
<div class="a" style="left:772px;top:637px;width:15px;height:15px;background:#f9fbfb"></div>
<div class="a" style="left:734px;top:652px;width:8px;height:5px;background:#dfdfdf"></div>
<div class="a" style="left:742px;top:652px;width:15px;height:5px;background:#dddddd"></div>
<div class="a" style="left:757px;top:652px;width:15px;height:5px;background:#e0e0e0"></div>
<div class="a" style="left:772px;top:652px;width:15px;height:5px;background:#e1e1e1"></div>
<div class="a" style="left:982px;top:374px;width:8px;height:8px;background:#cad1d3"></div>
<div class="a" style="left:990px;top:374px;width:15px;height:8px;background:#cbd2d4"></div>
<div class="a" style="left:1005px;top:374px;width:15px;height:8px;background:#c7ced0"></div>
<div class="a" style="left:1020px;top:374px;width:15px;height:8px;background:#c6cdcf"></div>
<div class="a" style="left:1035px;top:374px;width:10px;height:8px;background:#cbd2d4"></div>
<div class="a" style="left:982px;top:382px;width:8px;height:15px;background:#e4eaec"></div>
<div class="a" style="left:990px;top:382px;width:15px;height:15px;background:#e1e7e9"></div>
<div class="a" style="left:1005px;top:382px;width:15px;height:15px;background:#e2e8ea"></div>
<div class="a" style="left:1020px;top:382px;width:15px;height:15px;background:#e1e7e9"></div>
<div class="a" style="left:1035px;top:382px;width:10px;height:15px;background:#e4eaec"></div>
<div class="a" style="left:982px;top:397px;width:8px;height:15px;background:#f7f9f9"></div>
<div class="a" style="left:990px;top:397px;width:15px;height:15px;background:#f9fbfb"></div>
<div class="a" style="left:1005px;top:397px;width:15px;height:15px;background:#fafcfc"></div>
<div class="a" style="left:1020px;top:397px;width:15px;height:15px;background:#f7f9f9"></div>
<div class="a" style="left:1035px;top:397px;width:10px;height:15px;background:#fafcfc"></div>
<div class="a" style="left:982px;top:412px;width:8px;height:15px;background:#d9d9d9"></div>
<div class="a" style="left:990px;top:412px;width:15px;height:15px;background:#d6d6d6"></div>
<div class="a" style="left:1005px;top:412px;width:15px;height:15px;background:#dadada"></div>
<div class="a" style="left:1020px;top:412px;width:15px;height:15px;background:#d6d6d6"></div>
<div class="a" style="left:1035px;top:412px;width:10px;height:15px;background:#dbdbdb"></div>
<div class="a" style="left:982px;top:427px;width:8px;height:15px;background:#f5f6f7"></div>
<div class="a" style="left:990px;top:427px;width:15px;height:15px;background:#f7f8f9"></div>
<div class="a" style="left:1005px;top:427px;width:15px;height:15px;background:#f7f8f9"></div>
<div class="a" style="left:1020px;top:427px;width:15px;height:15px;background:#fafbfc"></div>
<div class="a" style="left:1035px;top:427px;width:10px;height:15px;background:#f8f9fa"></div>
<div class="a" style="left:982px;top:442px;width:8px;height:15px;background:#cfe7f0"></div>
<div class="a" style="left:990px;top:442px;width:15px;height:15px;background:#d1e9f2"></div>
<div class="a" style="left:1005px;top:442px;width:15px;height:15px;background:#d1e9f2"></div>
<div class="a" style="left:1020px;top:442px;width:15px;height:15px;background:#cfe7f0"></div>
<div class="a" style="left:1035px;top:442px;width:10px;height:15px;background:#cee6ef"></div>
<div class="a" style="left:982px;top:457px;width:8px;height:15px;background:#c1d9e2"></div>
<div class="a" style="left:990px;top:457px;width:15px;height:15px;background:#c0d8e1"></div>
<div class="a" style="left:1005px;top:457px;width:15px;height:15px;background:#c1d9e2"></div>
<div class="a" style="left:1020px;top:457px;width:15px;height:15px;background:#c5dde6"></div>
<div class="a" style="left:1035px;top:457px;width:10px;height:15px;background:#c1d9e2"></div>
<div class="a" style="left:982px;top:472px;width:8px;height:15px;background:#e7f7fd"></div>
<div class="a" style="left:990px;top:472px;width:15px;height:15px;background:#e5f5fb"></div>
<div class="a" style="left:1005px;top:472px;width:15px;height:15px;background:#e3f3f9"></div>
<div class="a" style="left:1020px;top:472px;width:15px;height:15px;background:#e3f3f9"></div>
<div class="a" style="left:1035px;top:472px;width:10px;height:15px;background:#e7f7fd"></div>
<div class="a" style="left:982px;top:487px;width:8px;height:15px;background:#e4e4e4"></div>
<div class="a" style="left:990px;top:487px;width:15px;height:15px;background:#e1e1e1"></div>
<div class="a" style="left:1005px;top:487px;width:15px;height:15px;background:#e7e7e7"></div>
<div class="a" style="left:1020px;top:487px;width:15px;height:15px;background:#e7e7e7"></div>
<div class="a" style="left:1035px;top:487px;width:10px;height:15px;background:#e1e1e1"></div>
<div class="a" style="left:982px;top:502px;width:8px;height:15px;background:#f1f1f1"></div>
<div class="a" style="left:990px;top:502px;width:15px;height:15px;background:#f2f2f2"></div>
<div class="a" style="left:1005px;top:502px;width:15px;height:15px;background:#f2f2f2"></div>
<div class="a" style="left:1020px;top:502px;width:15px;height:15px;background:#eeeeee"></div>
<div class="a" style="left:1035px;top:502px;width:10px;height:15px;background:#efefef"></div>
<div class="a" style="left:982px;top:517px;width:8px;height:15px;background:#f1f9fc"></div>
<div class="a" style="left:990px;top:517px;width:15px;height:15px;background:#eef6f9"></div>
<div class="a" style="left:1005px;top:517px;width:15px;height:15px;background:#f2fafd"></div>
<div class="a" style="left:1020px;top:517px;width:15px;height:15px;background:#f3fbfe"></div>
<div class="a" style="left:1035px;top:517px;width:10px;height:15px;background:#eff7fa"></div>
<div class="a" style="left:982px;top:532px;width:8px;height:15px;background:#cdd4d7"></div>
<div class="a" style="left:990px;top:532px;width:15px;height:15px;background:#ced5d8"></div>
<div class="a" style="left:1005px;top:532px;width:15px;height:15px;background:#cdd4d7"></div>
<div class="a" style="left:1020px;top:532px;width:15px;height:15px;background:#d1d8db"></div>
<div class="a" style="left:1035px;top:532px;width:10px;height:15px;background:#cfd6d9"></div>
<div class="a" style="left:982px;top:547px;width:8px;height:15px;background:#f0f9fc"></div>
<div class="a" style="left:990px;top:547px;width:15px;height:15px;background:#f0f9fc"></div>
<div class="a" style="left:1005px;top:547px;width:15px;height:15px;background:#ebf4f7"></div>
<div class="a" style="left:1020px;top:547px;width:15px;height:15px;background:#ebf4f7"></div>
<div class="a" style="left:1035px;top:547px;width:10px;height:15px;background:#eff8fb"></div>
<div class="a" style="left:982px;top:562px;width:8px;height:15px;background:#f4f4f4"></div>
<div class="a" style="left:990px;top:562px;width:15px;height:15px;background:#f4f4f4"></div>
<div class="a" style="left:1005px;top:562px;width:15px;height:15px;background:#f7f7f7"></div>
<div class="a" style="left:1020px;top:562px;width:15px;height:15px;background:#f8f8f8"></div>
<div class="a" style="left:1035px;top:562px;width:10px;height:15px;background:#f3f3f3"></div>
<div class="a" style="left:982px;top:577px;width:8px;height:15px;background:#e2e2e2"></div>
<div class="a" style="left:990px;top:577px;width:15px;height:15px;background:#e5e5e5"></div>
<div class="a" style="left:1005px;top:577px;width:15px;height:15px;background:#e5e5e5"></div>
<div class="a" style="left:1020px;top:577px;width:15px;height:15px;background:#e0e0e0"></div>
<div class="a" style="left:1035px;top:577px;width:10px;height:15px;background:#dfdfdf"></div>
<div class="a" style="left:982px;top:592px;width:8px;height:15px;background:#f3f8fa"></div>
<div class="a" style="left:990px;top:592px;width:15px;height:15px;background:#f6fbfd"></div>
<div class="a" style="left:1005px;top:592px;width:15px;height:15px;background:#f6fbfd"></div>
<div class="a" style="left:1020px;top:592px;width:15px;height:15px;background:#f2f7f9"></div>
<div class="a" style="left:1035px;top:592px;width:10px;height:15px;background:#f5fafc"></div>
<div class="a" style="left:982px;top:607px;width:8px;height:15px;background:#d9e1e4"></div>
<div class="a" style="left:990px;top:607px;width:15px;height:15px;background:#d8e0e3"></div>
<div class="a" style="left:1005px;top:607px;width:15px;height:15px;background:#d7dfe2"></div>
<div class="a" style="left:1020px;top:607px;width:15px;height:15px;background:#dce4e7"></div>
<div class="a" style="left:1035px;top:607px;width:10px;height:15px;background:#d6dee1"></div>
<div class="a" style="left:982px;top:622px;width:8px;height:15px;background:#e3ebee"></div>
<div class="a" style="left:990px;top:622px;width:15px;height:15px;background:#e7eff2"></div>
<div class="a" style="left:1005px;top:622px;width:15px;height:15px;background:#e4ecef"></div>
<div class="a" style="left:1020px;top:622px;width:15px;height:15px;background:#e5edf0"></div>
<div class="a" style="left:1035px;top:622px;width:10px;height:15px;background:#e9f1f4"></div>
<div class="a" style="left:982px;top:637px;width:8px;height:15px;background:#fbfdfd"></div>
<div class="a" style="left:990px;top:637px;width:15px;height:15px;background:#fbfdfd"></div>
<div class="a" style="left:1005px;top:637px;width:15px;height:15px;background:#f9fbfb"></div>
<div class="a" style="left:1020px;top:637px;width:15px;height:15px;background:#f6f8f8"></div>
<div class="a" style="left:1035px;top:637px;width:10px;height:15px;background:#fbfdfd"></div>
<div class="a" style="left:982px;top:652px;width:8px;height:5px;background:#dfdfdf"></div>
<div class="a" style="left:990px;top:652px;width:15px;height:5px;background:#dfdfdf"></div>
<div class="a" style="left:1005px;top:652px;width:15px;height:5px;background:#e3e3e3"></div>
<div class="a" style="left:1020px;top:652px;width:15px;height:5px;background:#e3e3e3"></div>
<div class="a" style="left:1035px;top:652px;width:10px;height:5px;background:#e2e2e2"></div>
<div class="a" style="left:1055px;top:374px;width:8px;height:8px;background:#c6cdcf"></div>
<div class="a" style="left:1063px;top:374px;width:15px;height:8px;background:#ccd3d5"></div>
<div class="a" style="left:1078px;top:374px;width:15px;height:8px;background:#cad1d3"></div>
<div class="a" style="left:1093px;top:374px;width:15px;height:8px;background:#c8cfd1"></div>
<div class="a" style="left:1108px;top:374px;width:10px;height:8px;background:#cad1d3"></div>
<div class="a" style="left:1055px;top:382px;width:8px;height:15px;background:#e0e6e8"></div>
<div class="a" style="left:1063px;top:382px;width:15px;height:15px;background:#e2e8ea"></div>
<div class="a" style="left:1078px;top:382px;width:15px;height:15px;background:#e1e7e9"></div>
<div class="a" style="left:1093px;top:382px;width:15px;height:15px;background:#e3e9eb"></div>
<div class="a" style="left:1108px;top:382px;width:10px;height:15px;background:#e5ebed"></div>
<div class="a" style="left:1055px;top:397px;width:8px;height:15px;background:#fbfdfd"></div>
<div class="a" style="left:1063px;top:397px;width:15px;height:15px;background:#f7f9f9"></div>
<div class="a" style="left:1078px;top:397px;width:15px;height:15px;background:#f8fafa"></div>
<div class="a" style="left:1093px;top:397px;width:15px;height:15px;background:#f7f9f9"></div>
<div class="a" style="left:1108px;top:397px;width:10px;height:15px;background:#fafcfc"></div>
<div class="a" style="left:1055px;top:412px;width:8px;height:15px;background:#d9d9d9"></div>
<div class="a" style="left:1063px;top:412px;width:15px;height:15px;background:#d8d8d8"></div>
<div class="a" style="left:1078px;top:412px;width:15px;height:15px;background:#d9d9d9"></div>
<div class="a" style="left:1093px;top:412px;width:15px;height:15px;background:#dadada"></div>
<div class="a" style="left:1108px;top:412px;width:10px;height:15px;background:#d9d9d9"></div>
<div class="a" style="left:1055px;top:427px;width:8px;height:15px;background:#f5f6f7"></div>
<div class="a" style="left:1063px;top:427px;width:15px;height:15px;background:#f8f9fa"></div>
<div class="a" style="left:1078px;top:427px;width:15px;height:15px;background:#f6f7f8"></div>
<div class="a" style="left:1093px;top:427px;width:15px;height:15px;background:#f6f7f8"></div>
<div class="a" style="left:1108px;top:427px;width:10px;height:15px;background:#f5f6f7"></div>
<div class="a" style="left:1055px;top:442px;width:8px;height:15px;background:#d0e8f1"></div>
<div class="a" style="left:1063px;top:442px;width:15px;height:15px;background:#d3ebf4"></div>
<div class="a" style="left:1078px;top:442px;width:15px;height:15px;background:#d1e9f2"></div>
<div class="a" style="left:1093px;top:442px;width:15px;height:15px;background:#d1e9f2"></div>
<div class="a" style="left:1108px;top:442px;width:10px;height:15px;background:#d0e8f1"></div>
<div class="a" style="left:1055px;top:457px;width:8px;height:15px;background:#c3dbe4"></div>
<div class="a" style="left:1063px;top:457px;width:15px;height:15px;background:#c4dce5"></div>
<div class="a" style="left:1078px;top:457px;width:15px;height:15px;background:#c0d8e1"></div>
<div class="a" style="left:1093px;top:457px;width:15px;height:15px;background:#bfd7e0"></div>
<div class="a" style="left:1108px;top:457px;width:10px;height:15px;background:#c4dce5"></div>
<div class="a" style="left:1055px;top:472px;width:8px;height:15px;background:#e4f4fa"></div>
<div class="a" style="left:1063px;top:472px;width:15px;height:15px;background:#e7f7fd"></div>
<div class="a" style="left:1078px;top:472px;width:15px;height:15px;background:#e7f7fd"></div>
<div class="a" style="left:1093px;top:472px;width:15px;height:15px;background:#e6f6fc"></div>
<div class="a" style="left:1108px;top:472px;width:10px;height:15px;background:#e6f6fc"></div>
<div class="a" style="left:1055px;top:487px;width:8px;height:15px;background:#e5e5e5"></div>
<div class="a" style="left:1063px;top:487px;width:15px;height:15px;background:#e3e3e3"></div>
<div class="a" style="left:1078px;top:487px;width:15px;height:15px;background:#e5e5e5"></div>
<div class="a" style="left:1093px;top:487px;width:15px;height:15px;background:#e3e3e3"></div>
<div class="a" style="left:1108px;top:487px;width:10px;height:15px;background:#e2e2e2"></div>
<div class="a" style="left:1055px;top:502px;width:8px;height:15px;background:#f3f3f3"></div>
<div class="a" style="left:1063px;top:502px;width:15px;height:15px;background:#ededed"></div>
<div class="a" style="left:1078px;top:502px;width:15px;height:15px;background:#f3f3f3"></div>
<div class="a" style="left:1093px;top:502px;width:15px;height:15px;background:#f1f1f1"></div>
<div class="a" style="left:1108px;top:502px;width:10px;height:15px;background:#efefef"></div>
<div class="a" style="left:1055px;top:517px;width:8px;height:15px;background:#edf5f8"></div>
<div class="a" style="left:1063px;top:517px;width:15px;height:15px;background:#f3fbfe"></div>
<div class="a" style="left:1078px;top:517px;width:15px;height:15px;background:#eef6f9"></div>
<div class="a" style="left:1093px;top:517px;width:15px;height:15px;background:#edf5f8"></div>
<div class="a" style="left:1108px;top:517px;width:10px;height:15px;background:#edf5f8"></div>
<div class="a" style="left:1055px;top:532px;width:8px;height:15px;background:#d2d9dc"></div>
<div class="a" style="left:1063px;top:532px;width:15px;height:15px;background:#d1d8db"></div>
<div class="a" style="left:1078px;top:532px;width:15px;height:15px;background:#d0d7da"></div>
<div class="a" style="left:1093px;top:532px;width:15px;height:15px;background:#cdd4d7"></div>
<div class="a" style="left:1108px;top:532px;width:10px;height:15px;background:#cfd6d9"></div>
<div class="a" style="left:1055px;top:547px;width:8px;height:15px;background:#eff8fb"></div>
<div class="a" style="left:1063px;top:547px;width:15px;height:15px;background:#ebf4f7"></div>
<div class="a" style="left:1078px;top:547px;width:15px;height:15px;background:#ebf4f7"></div>
<div class="a" style="left:1093px;top:547px;width:15px;height:15px;background:#eef7fa"></div>
<div class="a" style="left:1108px;top:547px;width:10px;height:15px;background:#f0f9fc"></div>
<div class="a" style="left:1055px;top:562px;width:8px;height:15px;background:#f2f2f2"></div>
<div class="a" style="left:1063px;top:562px;width:15px;height:15px;background:#f3f3f3"></div>
<div class="a" style="left:1078px;top:562px;width:15px;height:15px;background:#f6f6f6"></div>
<div class="a" style="left:1093px;top:562px;width:15px;height:15px;background:#f4f4f4"></div>
<div class="a" style="left:1108px;top:562px;width:10px;height:15px;background:#f3f3f3"></div>
<div class="a" style="left:1055px;top:577px;width:8px;height:15px;background:#e4e4e4"></div>
<div class="a" style="left:1063px;top:577px;width:15px;height:15px;background:#dfdfdf"></div>
<div class="a" style="left:1078px;top:577px;width:15px;height:15px;background:#e3e3e3"></div>
<div class="a" style="left:1093px;top:577px;width:15px;height:15px;background:#e3e3e3"></div>
<div class="a" style="left:1108px;top:577px;width:10px;height:15px;background:#e2e2e2"></div>
<div class="a" style="left:1055px;top:592px;width:8px;height:15px;background:#f1f6f8"></div>
<div class="a" style="left:1063px;top:592px;width:15px;height:15px;background:#f5fafc"></div>
<div class="a" style="left:1078px;top:592px;width:15px;height:15px;background:#f1f6f8"></div>
<div class="a" style="left:1093px;top:592px;width:15px;height:15px;background:#f3f8fa"></div>
<div class="a" style="left:1108px;top:592px;width:10px;height:15px;background:#f2f7f9"></div>
<div class="a" style="left:1055px;top:607px;width:8px;height:15px;background:#d8e0e3"></div>
<div class="a" style="left:1063px;top:607px;width:15px;height:15px;background:#dce4e7"></div>
<div class="a" style="left:1078px;top:607px;width:15px;height:15px;background:#dae2e5"></div>
<div class="a" style="left:1093px;top:607px;width:15px;height:15px;background:#d9e1e4"></div>
<div class="a" style="left:1108px;top:607px;width:10px;height:15px;background:#dce4e7"></div>
<div class="a" style="left:1055px;top:622px;width:8px;height:15px;background:#e9f1f4"></div>
<div class="a" style="left:1063px;top:622px;width:15px;height:15px;background:#e3ebee"></div>
<div class="a" style="left:1078px;top:622px;width:15px;height:15px;background:#e5edf0"></div>
<div class="a" style="left:1093px;top:622px;width:15px;height:15px;background:#e4ecef"></div>
<div class="a" style="left:1108px;top:622px;width:10px;height:15px;background:#e4ecef"></div>
<div class="a" style="left:1055px;top:637px;width:8px;height:15px;background:#f5f7f7"></div>
<div class="a" style="left:1063px;top:637px;width:15px;height:15px;background:#f9fbfb"></div>
<div class="a" style="left:1078px;top:637px;width:15px;height:15px;background:#fbfdfd"></div>
<div class="a" style="left:1093px;top:637px;width:15px;height:15px;background:#f5f7f7"></div>
<div class="a" style="left:1108px;top:637px;width:10px;height:15px;background:#f6f8f8"></div>
<div class="a" style="left:1055px;top:652px;width:8px;height:5px;background:#dedede"></div>
<div class="a" style="left:1063px;top:652px;width:15px;height:5px;background:#e3e3e3"></div>
<div class="a" style="left:1078px;top:652px;width:15px;height:5px;background:#dfdfdf"></div>
<div class="a" style="left:1093px;top:652px;width:15px;height:5px;background:#e3e3e3"></div>
<div class="a" style="left:1108px;top:652px;width:10px;height:5px;background:#dedede"></div>
<div class="a" style="left:279px;top:299px;width:1px;height:29px;background:#8aa2bd"></div>
<div class="a" style="left:642px;top:299px;width:1px;height:29px;background:#8aa2bd"></div>
<div class="a" style="left:729px;top:299px;width:1px;height:29px;background:#8aa2bd"></div>
<div class="a" style="left:975px;top:299px;width:1px;height:29px;background:#8aa2bd"></div>
<div class="a" style="left:1049px;top:299px;width:1px;height:29px;background:#8aa2bd"></div>
<div class="a" style="left:1142px;top:299px;width:1px;height:29px;background:#8aa2bd"></div>
<div class="a" style="left:279px;top:360px;width:1px;height:377px;background:#8aa2bd"></div>
<div class="a" style="left:642px;top:360px;width:1px;height:377px;background:#8aa2bd"></div>
<div class="a" style="left:729px;top:360px;width:1px;height:377px;background:#8aa2bd"></div>
<div class="a" style="left:975px;top:360px;width:1px;height:377px;background:#8aa2bd"></div>
<div class="a" style="left:1050px;top:360px;width:1px;height:377px;background:#8aa2bd"></div>
<div class="a" style="left:1124px;top:360px;width:1px;height:297px;background:#8aa2bd"></div>
<div class="a" style="left:1142px;top:360px;width:1px;height:377px;background:#8aa2bd"></div>
<div class="a" style="left:239px;top:657px;width:957px;height:80px;background:#f9f9f9"></div>
<div class="a" style="left:239px;top:657px;width:957px;height:2px;background:#111"></div>
<div class="a" style="left:239px;top:697px;width:957px;height:1px;background:#222"></div>
<div class="a" style="left:279px;top:659px;width:1px;height:78px;background:#8aa2bd"></div>
<div class="a" style="left:642px;top:659px;width:1px;height:78px;background:#8aa2bd"></div>
<div class="a" style="left:729px;top:659px;width:1px;height:78px;background:#8aa2bd"></div>
<div class="a" style="left:975px;top:659px;width:1px;height:78px;background:#8aa2bd"></div>
<div class="a" style="left:1050px;top:659px;width:1px;height:78px;background:#8aa2bd"></div>
<div class="a" style="left:1142px;top:659px;width:1px;height:78px;background:#8aa2bd"></div>
<div class="a tt" style="left:286px;top:670px">Total sélection</div>
<div class="a tt" style="left:286px;top:710px">Total</div>
<div class="a" style="left:239px;top:737px;width:973px;height:15px;background:#fafafa"></div>
<svg class="a" style="left:244px;top:740px" width="8" height="10" viewBox="0 0 8 10"><path d="M7 0.5 V9.5 L1 5Z" fill="#777"/></svg>
<div class="a" style="left:258px;top:740px;width:247px;height:9px;border-radius:5px;background:#8c8c8c"></div>
<svg class="a" style="left:1184px;top:740px" width="8" height="10" viewBox="0 0 8 10"><path d="M1 0.5 V9.5 L7 5Z" fill="#777"/></svg>
<div class="a" style="left:1196px;top:299px;width:15px;height:438px;background:#fafafa"></div>
<svg class="a" style="left:1198px;top:303px" width="11" height="8" viewBox="0 0 11 8"><path d="M0.5 7.5 H10.5 L5.5 1Z" fill="#777"/></svg>
<div class="a" style="left:1199px;top:317px;width:9px;height:175px;border-radius:5px;background:#8c8c8c"></div>
<svg class="a" style="left:1198px;top:725px" width="11" height="8" viewBox="0 0 11 8"><path d="M0.5 0.5 H10.5 L5.5 7Z" fill="#777"/></svg>
<div class="a" style="left:238px;top:297px;width:975px;height:457px;border:2px solid #7f99b9;border-radius:4px"></div>
<div class="a" style="left:674px;top:774px;font-size:13px;color:#333">Nb lignes / page :</div>
<div class="a" style="left:785px;top:762px;width:84px;height:39px;border:1px solid #b5b5b5;border-radius:3px;background:#fff"></div>
<div class="a" style="left:801px;top:773px;font-size:14px;color:#333">20</div>
<svg class="a" style="left:843px;top:779px" width="11" height="6" viewBox="0 0 11 6"><path d="M0 0 H11 L5.5 6Z" fill="#555"/></svg>
<div class="a" style="left:906px;top:774px;font-size:13.5px;color:#333">Page 1 / 3</div>
<svg class="a" style="left:1014px;top:775px" width="15" height="15" viewBox="0 0 15 15"><path d="M1.2 1 V14" stroke="#999" stroke-width="2"/><path d="M12 1.5 L6 7.5 L12 13.5" fill="none" stroke="#999" stroke-width="2"/></svg>
<svg class="a" style="left:1063px;top:775px" width="10" height="15" viewBox="0 0 10 15"><path d="M8.5 1.5 L2.5 7.5 L8.5 13.5" fill="none" stroke="#999" stroke-width="2"/></svg>
<svg class="a" style="left:1111px;top:775px" width="10" height="15" viewBox="0 0 10 15"><path d="M1.5 1.5 L7.5 7.5 L1.5 13.5" fill="none" stroke="#555" stroke-width="2"/></svg>
<svg class="a" style="left:1156px;top:775px" width="15" height="15" viewBox="0 0 15 15"><path d="M13.8 1 V14" stroke="#555" stroke-width="2"/><path d="M3 1.5 L9 7.5 L3 13.5" fill="none" stroke="#555" stroke-width="2"/></svg>
<svg class="a" style="left:1193px;top:772px" width="21" height="21" viewBox="0 0 21 21"><circle cx="10.5" cy="10.5" r="10.3" fill="#7f99b9"/><circle cx="10.5" cy="6" r="1.6" fill="#fff"/><path d="M8 9 H11.8 V14.5 H13 V16 H8 V14.5 H9.3 V10.5 H8 Z" fill="#fff"/></svg>
<!-- REDBOX --><div class="a" style="left:234px;top:212px;width:984px;height:593px;border:2px solid #ff0000;z-index:5"></div>
</body></html>
